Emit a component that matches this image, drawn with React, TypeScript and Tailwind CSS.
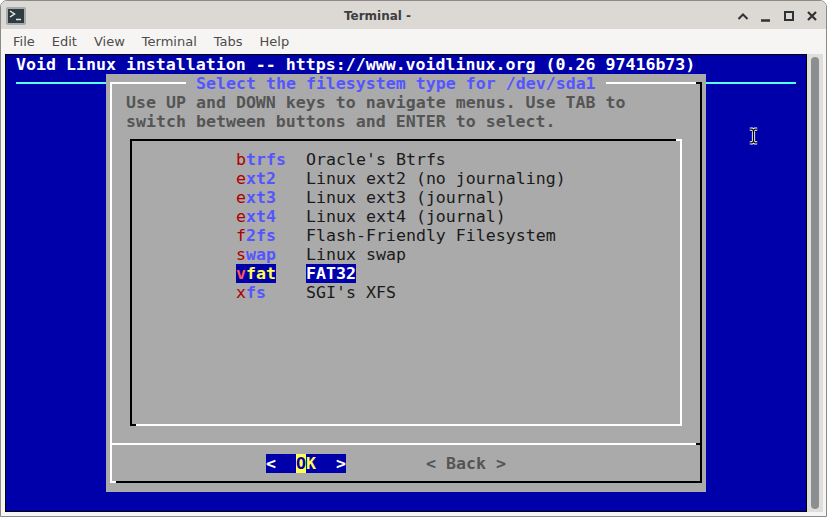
const MENU = [
  ["b", "trfs", "Oracle's Btrfs"],
  ["e", "xt2", "Linux ext2 (no journaling)"],
  ["e", "xt3", "Linux ext3 (journal)"],
  ["e", "xt4", "Linux ext4 (journal)"],
  ["f", "2fs", "Flash-Friendly Filesystem"],
  ["s", "wap", "Linux swap"],
  ["v", "fat", "FAT32"],
  ["x", "fs", "SGI's XFS"],
];

function WindowButtons() {
  return (
    <div className="flex items-center gap-[11px] text-[#2e3436] mt-[1px]">
      <svg width="12" height="12" viewBox="0 0 12 12" fill="none" stroke="currentColor" strokeWidth="2">
        <path d="M1.5 9 L6 4.5 L10.5 9" />
      </svg>
      <svg width="12" height="12" viewBox="0 0 12 12" fill="none" stroke="currentColor" strokeWidth="2.4">
        <path d="M1 10.5 H10" />
      </svg>
      <svg width="12" height="12" viewBox="0 0 12 12" fill="none" stroke="currentColor" strokeWidth="2">
        <rect x="2" y="2" width="8" height="8" />
      </svg>
      <svg width="12" height="12" viewBox="0 0 12 12" fill="none" stroke="currentColor" strokeWidth="2.2">
        <path d="M2 2 L10 10 M10 2 L2 10" />
      </svg>
    </div>
  );
}

export default function App() {
  return (
    <div className="w-[827px] h-[517px] overflow-hidden bg-[#f6f5f4] rounded-t-[7px] border-t border-x border-[#8a8a88] border-b flex flex-col font-['DejaVu_Sans',sans-serif]">
      {/* title bar */}
      <div className="h-[28px] shrink-0 bg-[#dcd8d4] flex items-center pl-[5px] pr-[8px] relative">
        <div className="w-[20px] h-[18px] bg-[#2e3b41] border-2 border-[#a3abac] rounded-[2px] shrink-0 mt-[2px] overflow-hidden">
          <svg width="16" height="14" viewBox="0 0 16 14" fill="none" stroke="#e8eaea" strokeWidth="1.5">
            <path d="M2 2 L6.5 5 L2 8" />
            <path d="M8 10.5 H13" />
          </svg>
        </div>
        <div className="flex-1 text-center text-[12px] font-bold text-[#3c3f41] mt-[1px] pr-[8px]">Terminal -</div>
        <WindowButtons />
      </div>

      {/* menu bar */}
      <div className="h-[25px] shrink-0 flex items-center gap-[17px] pl-[12px] text-[13px] text-[#4c4c4a]">
        <span>File</span>
        <span>Edit</span>
        <span>View</span>
        <span>Terminal</span>
        <span>Tabs</span>
        <span>Help</span>
      </div>

      <div className="flex h-[458px] shrink-0">
        {/* terminal */}
        <div className="w-[802px] ml-[4px] shrink-0 border border-black bg-[#0000aa] font-['DejaVu_Sans_Mono',monospace] text-[16.6px] leading-[19px] relative overflow-hidden">
          <div className="pl-[10px] font-bold text-white h-[19px]">
            Void Linux installation -- https://www.voidlinux.org (0.26 97416b73)
          </div>
          <div className="h-[2px] bg-[#55ffff] mx-[10px] mt-[8px]"></div>

          {/* dialog */}
          <div className="relative mt-[-10px] ml-[100px] w-[600px] h-[418px] bg-[#aaaaaa] pt-[8px] pl-[4px] pr-[4px] pb-[9px]">
            <div className="relative h-full border-2 border-t-white border-l-white border-r-black border-b-black flex flex-col">
              <span className="absolute top-[-2px] right-[-2px] w-[6px] h-[2px] bg-black"></span>
              <span className="absolute bottom-[-2px] left-[-2px] w-[6px] h-[2px] bg-white"></span>
              <div className="absolute top-[-10px] left-[74px] bg-[#aaaaaa] px-[10px] font-bold text-[#5555ff] whitespace-pre">
                Select the filesystem type for /dev/sda1
              </div>

              <div className="pl-[14px] pt-[9px] font-bold text-[#555555]">
                <div>Use UP and DOWN keys to navigate menus. Use TAB to</div>
                <div>switch between buttons and ENTER to select.</div>
              </div>

              {/* menu box */}
              <div className="relative mt-[8px] ml-[18px] w-[552px] h-[287px] border-2 border-t-black border-l-black border-r-white border-b-white pt-[9px] pl-[104px]">
                <span className="absolute top-[-2px] right-[-2px] w-[6px] h-[2px] bg-white"></span>
                <span className="absolute bottom-[-2px] left-[-2px] w-[6px] h-[2px] bg-black"></span>
                {MENU.map(([hot, rest, desc]) => {
                  const sel = hot === "v";
                  return (
                    <div key={hot + rest} className="flex h-[19px]">
                      <div className="w-[70px]">
                        <span className={sel ? "bg-[#0000aa] font-bold inline-block" : "inline-block"}>
                          <span className={sel ? "text-[#ff5555]" : "text-[#aa0000]"}>{hot}</span>
                          <span className={sel ? "text-[#ffff55]" : "text-[#5555ff] font-bold"}>{rest}</span>
                        </span>
                      </div>
                      <span className={sel ? "bg-[#0000aa] text-white font-bold" : "text-[#1a1a1a]"}>{desc}</span>
                    </div>
                  );
                })}
              </div>

              {/* separator */}
              <div className="relative mt-[17px] h-[2px] bg-white">
                <span className="absolute top-0 right-0 w-[4px] h-[2px] bg-black"></span>
              </div>

              {/* buttons */}
              <div className="flex mt-[9px] pl-[154px] font-bold">
                <div className="w-[80px] h-[19px] bg-[#0000aa] flex text-white whitespace-pre">
                  <span>{"<  "}</span>
                  <span className="bg-[#ffff55] text-[#0000aa]">O</span>
                  <span className="text-[#ffff55]">K</span>
                  <span>{"  >"}</span>
                </div>
                <div className="ml-[80px] text-[#555555] whitespace-pre">{"< Back >"}</div>
              </div>
            </div>
          </div>

          {/* mouse pointer */}
          <svg className="absolute left-[742px] top-[72px]" width="11" height="18" viewBox="0 0 12 18" fill="none">
            <path d="M2 1.5 H4.5 L6 3 L7.5 1.5 H10 M6 3 V15 M2 16.5 H4.5 L6 15 L7.5 16.5 H10" stroke="#fff" strokeWidth="3.5" />
            <path d="M2 1.5 H4.5 L6 3 L7.5 1.5 H10 M6 3 V15 M2 16.5 H4.5 L6 15 L7.5 16.5 H10" stroke="#000" strokeWidth="1.5" />
          </svg>
        </div>

        {/* scrollbar */}
        <div className="w-[16px] bg-[#dfdedb] pl-[4px] pt-[3px] pb-[3px]">
          <div className="w-[8px] h-full bg-[#8b8f8f] rounded-full"></div>
        </div>
      </div>
    </div>
  );
}
